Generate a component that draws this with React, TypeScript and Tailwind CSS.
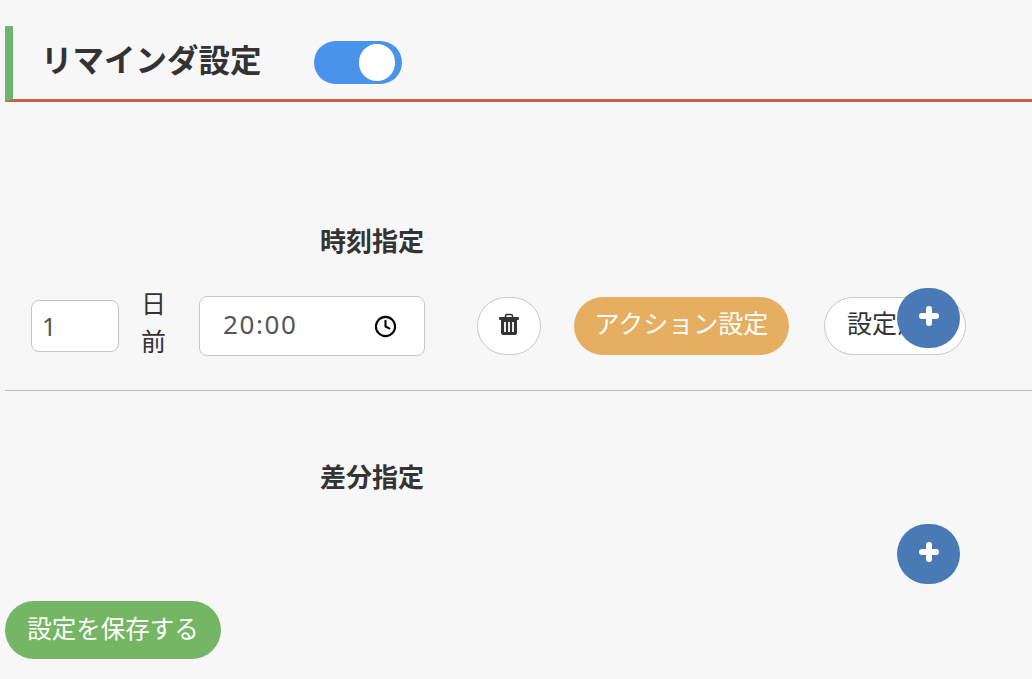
import { Clock } from 'lucide-react'

const font = { fontFamily: '"Noto Sans", "Noto Sans CJK JP", sans-serif' }

function PlusButton({ className }: { className: string }) {
  return (
    <button className={`flex w-[63px] h-[60px] items-center justify-center rounded-full bg-[#4a7ab5] ${className}`}>
      <svg width="22" height="22" viewBox="0 0 22 22" className="-mt-[5px]">
        <path d="M11 4v14M4 11h14" stroke="#fff" strokeWidth="6" strokeLinecap="round" />
      </svg>
    </button>
  )
}

function TrashIcon() {
  return (
    <svg width="20" height="22" viewBox="0 0 20 22" className="-mt-[4px]">
      <path d="M6.5 4.5V3a1.5 1.5 0 0 1 1.5-1.5h4A1.5 1.5 0 0 1 13.500 3v1.500" fill="none" stroke="#333" strokeWidth="1.6" />
      <rect x="0" y="4" width="20" height="3" rx="1" fill="#333" />
      <path d="M2 6h16v13.500a2.500 2.500 0 0 1-2.500 2.500h-11A2.500 2.500 0 0 1 2 19.500z" fill="#333" />
      <path d="M6 9v10M10 9v10M14 9v10" stroke="#fff" strokeWidth="1.800" />
    </svg>
  )
}

export default function App() {
  return (
    <div className="h-[679px] w-[1032px] overflow-hidden bg-[#f7f7f7] text-[#333] pt-[26px] pl-[5px]" style={font}>
      {/* header */}
      <div className="flex h-[76px] items-center border-l-[8px] border-b-[3px] border-l-[#6cb56f] border-b-[#c4604a] pl-[28px]">
        <h1 className="text-[31.5px] font-bold leading-none -mt-[5px] w-[273px]">リマインダ設定</h1>
        <div className="flex h-[43px] w-[88px] items-center justify-end rounded-full bg-[#4a93ec] pr-[7px] -mt-[1px]">
          <div className="h-[37px] w-[36px] rounded-full bg-white" />
        </div>
      </div>

      {/* time section */}
      <h2 className="mt-[120px] pl-[315px] text-[26px] font-bold leading-[38px]">時刻指定</h2>
      <div className="relative mt-[36px] flex h-[60px] items-center pl-[26px]">
        <input
          readOnly
          value="1"
          className="h-[52px] w-[88px] rounded-[8px] border border-[#c4c4c4] bg-white px-[10px] text-[25px] text-[#555] outline-none"
        />
        <div className="ml-[22px] -mt-[8px] w-[24px] text-center text-[25px] leading-[38px] text-[#333]">日前</div>
        <div className="ml-[34px] flex h-[60px] w-[226px] items-center justify-between rounded-[8px] border border-[#c8c8c8] bg-white pl-[23px] pr-[27px] text-[26px] tracking-[1.6px] text-[#555]">
          <span className="-mt-[4px]">20:00</span>
          <Clock size={23} strokeWidth={2.2} className="text-black" />
        </div>
        <button className="ml-[52px] flex h-[58px] w-[64px] items-center justify-center rounded-full border border-[#c8c8c8] bg-white">
          <TrashIcon />
        </button>
        <button className="ml-[33px] h-[58px] w-[215px] rounded-full bg-[#e5ae60] pb-[4px] text-[25px] text-white">アクション設定</button>
        <button className="ml-[35px] h-[58px] w-[142px] overflow-hidden whitespace-nowrap rounded-full border border-[#c8c8c8] bg-white pb-[4px] pl-[22px] text-left text-[25px] text-[#333]">設定反映</button>
        <PlusButton className="absolute left-[892px] top-[-8px]" />
      </div>
      <div className="h-px bg-[#bdbdbd] mt-[34px]" />

      {/* diff section */}
      <h2 className="mt-[67px] pl-[315px] text-[26px] font-bold leading-[38px]">差分指定</h2>
      <div className="mt-[28px] pl-[892px]">
        <PlusButton className="" />
      </div>
      <button className="mt-[17px] h-[58px] w-[216px] rounded-full bg-[#75b665] pb-[2px] text-[24.5px] text-white">設定を保存する</button>
    </div>
  )
}
